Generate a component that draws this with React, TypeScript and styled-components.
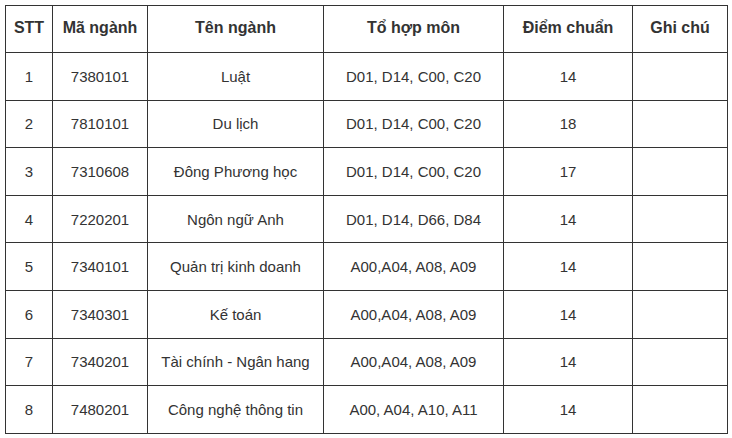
import React from "react";
import styled, { createGlobalStyle } from "styled-components";

const Global = createGlobalStyle`
  html, body { margin: 0; padding: 0; background: #fff; }
  body { font-family: "Liberation Sans", Arial, sans-serif; }
`;

const Wrap = styled.div`
  padding: 5px 6px 0 5px;
`;

const Table = styled.table`
  border-collapse: collapse;
  table-layout: fixed;
  width: 722px;
  font-family: "Liberation Sans", Arial, sans-serif;
  font-size: 15px;
  color: #333;
`;

const HeadCell = styled.th`
  border: 1px solid #333;
  font-weight: bold;
  font-size: 16px;
  line-height: 18px;
  text-align: center;
  vertical-align: middle;
  padding: 0 4px 2px;
  height: 44px;
  color: #333;
`;

const Cell = styled.td`
  border: 1px solid #333;
  text-align: center;
  vertical-align: middle;
  padding: 0 4px;
  height: 46.6px;
  white-space: nowrap;
`;

const widths = [47, 95, 176, 180, 129, 95];

const headers = ["STT", "Mã ngành", "Tên ngành", "Tổ hợp môn", "Điểm chuẩn", "Ghi chú"];

const rows: [string, string, string, string, string][] = [
  ["1", "7380101", "Luật", "D01, D14, C00, C20", "14"],
  ["2", "7810101", "Du lịch", "D01, D14, C00, C20", "18"],
  ["3", "7310608", "Đông Phương học", "D01, D14, C00, C20", "17"],
  ["4", "7220201", "Ngôn ngữ Anh", "D01, D14, D66, D84", "14"],
  ["5", "7340101", "Quản trị kinh doanh", "A00,A04, A08, A09", "14"],
  ["6", "7340301", "Kế toán", "A00,A04, A08, A09", "14"],
  ["7", "7340201", "Tài chính - Ngân hang", "A00,A04, A08, A09", "14"],
  ["8", "7480201", "Công nghệ thông tin", "A00, A04, A10, A11", "14"],
];

export default function App() {
  return (
    <>
      <Global />
      <Wrap>
        <Table>
          <colgroup>
            {widths.map((w, i) => (
              <col key={i} style={{ width: w }} />
            ))}
          </colgroup>
          <thead>
            <tr>
              {headers.map((h) => (
                <HeadCell key={h}>{h}</HeadCell>
              ))}
            </tr>
          </thead>
          <tbody>
            {rows.map((r) => (
              <tr key={r[0]}>
                {r.map((c, i) => (
                  <Cell key={i}>{c}</Cell>
                ))}
                <Cell />
              </tr>
            ))}
          </tbody>
        </Table>
      </Wrap>
    </>
  );
}
